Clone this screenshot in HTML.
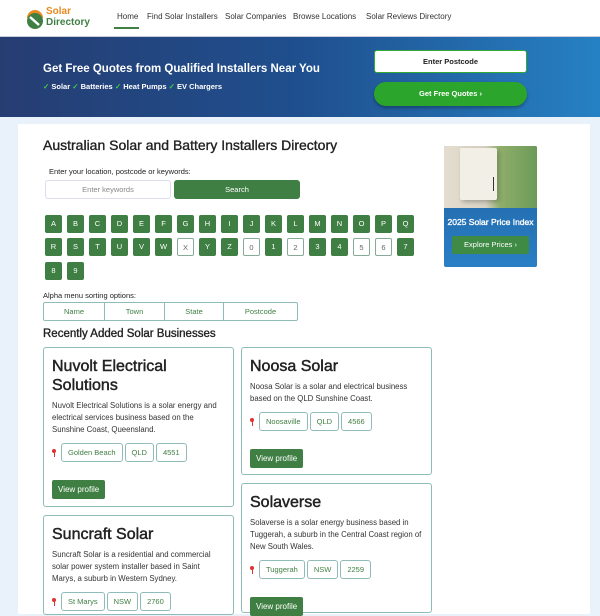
<!DOCTYPE html>
<html><head><meta charset="utf-8"><style>
*{box-sizing:border-box;margin:0;padding:0}
body{width:600px;height:600px;overflow:hidden;background:#e9f2fa;font-family:"Liberation Sans",sans-serif;color:#222;position:relative}
.hdr{position:absolute;left:0;top:0;width:600px;height:37px;background:#fff;border-bottom:1px solid #ccd}
.nav{position:absolute;top:12px;font-size:8px;color:#333}
.ban{position:absolute;left:0;top:37px;width:600px;height:80px;background:linear-gradient(90deg,#263d72 0%,#1f4f8e 50%,#2681c4 100%)}
.main{position:absolute;left:18px;top:124px;width:572px;height:490px;background:#fff}
.abs{position:absolute}
.md{-webkit-text-stroke:0.35px currentColor}
.lb{position:absolute;width:17px;height:18px;background:#3f7f43;color:#fff;font-size:7.5px;text-align:center;line-height:18px;border-radius:2px}
.lb.o{background:#fff;color:#666;border:1px solid #8a9}
.card{position:absolute;border:1px solid #8fbcb8;border-radius:3px;background:#fff}
.card h3{font-size:16px;font-weight:normal;color:#222;line-height:19px;margin:9px 0 0 8px;-webkit-text-stroke:0.45px #222}
.card p{font-size:7.8px;line-height:12px;color:#333;margin:5px 8px 0 8px}
.tags{display:flex;align-items:center;margin:7px 0 0 8px}
.pin{width:4px;height:8px;margin-right:5px;position:relative}
.pin:before{content:"";position:absolute;left:0;top:0;width:4px;height:4px;border-radius:50%;background:#d33}
.pin:after{content:"";position:absolute;left:1.5px;top:3px;width:1px;height:5px;background:#d33}
.tag{border:1px solid #8fbcb8;border-radius:3px;font-size:7.5px;color:#3f7f43;padding:0 6px;height:19px;line-height:17px;margin-right:2px}
.vp{display:inline-block;background:#3f7f43;color:#fff;font-size:8px;height:19px;line-height:19px;padding:0 6px;border-radius:2px;margin-left:8px}
</style></head><body>
<div class="hdr">
 <svg class="abs" style="left:25px;top:6px" width="20" height="25" viewBox="0 0 20 25"><path d="M2 12 A8 8 0 0 1 18 12Z" fill="#e88a20"/><circle cx="10" cy="15" r="8" fill="#3f7f43"/><path d="M5 11 L14 19" stroke="#fff" stroke-width="2.5"/></svg>
 <div class="abs" style="left:46px;top:7px;font-size:10px;font-weight:bold;color:#e88a20;line-height:10px">Solar</div>
 <div class="abs" style="left:46px;top:18px;font-size:10px;font-weight:bold;color:#3f7f43;line-height:10px">Directory</div>
 <div class="nav" style="left:117px">Home</div>
 <div class="abs" style="left:114px;top:27px;width:25px;height:2px;background:#3f7f43"></div>
 <div class="nav" style="left:147px">Find Solar Installers</div>
 <div class="nav" style="left:225px">Solar Companies</div>
 <div class="nav" style="left:293px">Browse Locations</div>
 <div class="nav" style="left:366px">Solar Reviews Directory</div>
</div>
<div class="ban">
 <div class="abs" style="left:43px;top:26px;color:#fff;font-size:11.5px;font-weight:bold">Get Free Quotes from Qualified Installers Near You</div>
 <div class="abs" style="left:43px;top:45px;color:#fff;font-size:7.5px;font-weight:bold"><span style="color:#4c4">✓</span> Solar <span style="color:#4c4">✓</span> Batteries <span style="color:#4c4">✓</span> Heat Pumps <span style="color:#4c4">✓</span> EV Chargers</div>
 <div class="abs" style="left:374px;top:13px;width:153px;height:23px;background:#fff;border:1px solid #3a3;border-radius:3px;font-size:7.5px;font-weight:bold;text-align:center;line-height:21px">Enter Postcode</div>
 <div class="abs" style="left:374px;top:45px;width:153px;height:24px;background:#2ca52c;border-radius:12px;color:#fff;font-size:7.5px;font-weight:bold;text-align:center;line-height:24px;box-shadow:0 2px 3px rgba(0,0,0,.3)">Get Free Quotes ›</div>
</div>
<div class="main"></div>
<div class="abs md" style="left:43px;top:137px;font-size:14px">Australian Solar and Battery Installers Directory</div>
<div class="abs" style="left:49px;top:167px;font-size:7.5px">Enter your location, postcode or keywords:</div>
<div class="abs" style="left:45px;top:180px;width:126px;height:19px;border:1px solid #dde;border-radius:3px;font-size:7.5px;color:#888;text-align:center;line-height:17px">Enter keywords</div>
<div class="abs" style="left:174px;top:180px;width:126px;height:19px;background:#3f7f43;border-radius:3px;font-size:7.5px;color:#fff;text-align:center;line-height:19px">Search</div>
<div class="lb" style="left:45px;top:215px">A</div><div class="lb" style="left:67px;top:215px">B</div><div class="lb" style="left:89px;top:215px">C</div><div class="lb" style="left:111px;top:215px">D</div><div class="lb" style="left:133px;top:215px">E</div><div class="lb" style="left:155px;top:215px">F</div><div class="lb" style="left:177px;top:215px">G</div><div class="lb" style="left:199px;top:215px">H</div><div class="lb" style="left:221px;top:215px">I</div><div class="lb" style="left:243px;top:215px">J</div><div class="lb" style="left:265px;top:215px">K</div><div class="lb" style="left:287px;top:215px">L</div><div class="lb" style="left:309px;top:215px">M</div><div class="lb" style="left:331px;top:215px">N</div><div class="lb" style="left:353px;top:215px">O</div><div class="lb" style="left:375px;top:215px">P</div><div class="lb" style="left:397px;top:215px">Q</div>
<div class="lb" style="left:45px;top:238px">R</div><div class="lb" style="left:67px;top:238px">S</div><div class="lb" style="left:89px;top:238px">T</div><div class="lb" style="left:111px;top:238px">U</div><div class="lb" style="left:133px;top:238px">V</div><div class="lb" style="left:155px;top:238px">W</div><div class="lb o" style="left:177px;top:238px">X</div><div class="lb" style="left:199px;top:238px">Y</div><div class="lb" style="left:221px;top:238px">Z</div><div class="lb o" style="left:243px;top:238px">0</div><div class="lb" style="left:265px;top:238px">1</div><div class="lb o" style="left:287px;top:238px">2</div><div class="lb" style="left:309px;top:238px">3</div><div class="lb" style="left:331px;top:238px">4</div><div class="lb o" style="left:353px;top:238px">5</div><div class="lb o" style="left:375px;top:238px">6</div><div class="lb" style="left:397px;top:238px">7</div>
<div class="lb" style="left:45px;top:262px">8</div><div class="lb" style="left:67px;top:262px">9</div>
<div class="abs" style="left:43px;top:291px;font-size:7.5px">Alpha menu sorting options:</div>
<div class="abs" style="left:43px;top:302px;width:255px;height:19px;border:1px solid #8fbcb8;border-radius:2px;display:flex;font-size:7.5px;color:#3f7f43;line-height:17px">
 <div style="width:61px;text-align:center;border-right:1px solid #8fbcb8">Name</div><div style="width:60px;text-align:center;border-right:1px solid #8fbcb8">Town</div><div style="width:59px;text-align:center;border-right:1px solid #8fbcb8">State</div><div style="flex:1;text-align:center">Postcode</div></div>
<div class="abs md" style="left:43px;top:328px;font-size:11.5px">Recently Added Solar Businesses</div>
<div class="card" style="left:43px;top:347px;width:191px;height:160px"><h3>Nuvolt Electrical Solutions</h3><p>Nuvolt Electrical Solutions is a solar energy and electrical services business based on the Sunshine Coast, Queensland.</p><div class="tags"><div class="pin"></div><div class="tag">Golden Beach</div><div class="tag">QLD</div><div class="tag">4551</div></div><div style="margin-top:17px"><span class="vp">View profile</span></div></div>
<div class="card" style="left:241px;top:347px;width:191px;height:128px"><h3>Noosa Solar</h3><p>Noosa Solar is a solar and electrical business based on the QLD Sunshine Coast.</p><div class="tags"><div class="pin"></div><div class="tag">Noosaville</div><div class="tag">QLD</div><div class="tag">4566</div></div><div style="margin-top:17px"><span class="vp">View profile</span></div></div>
<div class="card" style="left:241px;top:483px;width:191px;height:130px"><h3>Solaverse</h3><p>Solaverse is a solar energy business based in Tuggerah, a suburb in the Central Coast region of New South Wales.</p><div class="tags"><div class="pin"></div><div class="tag">Tuggerah</div><div class="tag">NSW</div><div class="tag">2259</div></div><div style="margin-top:17px"><span class="vp">View profile</span></div></div>
<div class="card" style="left:43px;top:515px;width:191px;height:100px"><h3>Suncraft Solar</h3><p>Suncraft Solar is a residential and commercial solar power system installer based in Saint Marys, a suburb in Western Sydney.</p><div class="tags"><div class="pin"></div><div class="tag">St Marys</div><div class="tag">NSW</div><div class="tag">2760</div></div></div>
<div class="abs" style="left:444px;top:146px;width:93px;height:121px;border-radius:2px;overflow:hidden;background:linear-gradient(180deg,#1e5fa0,#2a7fc4)">
 <div class="abs" style="left:0;top:0;width:93px;height:62px;background:linear-gradient(90deg,#e4ddd0 0%,#d8d2c4 45%,#8fae6a 60%,#6c9a58 100%)"></div>
 <div class="abs" style="left:16px;top:2px;width:37px;height:52px;background:#f2efe6;border-radius:2px;box-shadow:2px 2px 4px rgba(0,0,0,.25)"></div>
 <div class="abs" style="left:49px;top:31px;width:1px;height:14px;background:#333"></div>
 <div class="abs md" style="left:0;top:71px;width:93px;text-align:center;color:#fff;font-size:8.5px">2025 Solar Price Index</div>
 <div class="abs" style="left:8px;top:90px;width:77px;height:18px;background:#3f8a45;border-radius:2px;color:#fff;font-size:7.5px;text-align:center;line-height:18px">Explore Prices ›</div>
</div>
</body></html>
